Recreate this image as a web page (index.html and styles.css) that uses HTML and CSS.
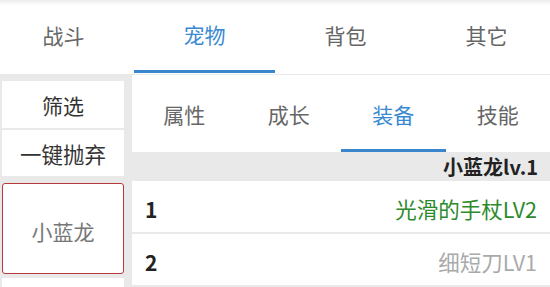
FILE: index.html
```html
<!DOCTYPE html>
<html lang="zh-CN">
<head>
    <meta charset="UTF-8">
    <meta name="viewport" content="width=device-width, initial-scale=1.0">
    <title>宠物</title>
    <link rel="stylesheet" href="styles.css">
</head>
<body>
    <div class="topbar">
        <div class="tabs">
            <div class="tab">战斗</div>
            <div class="tab active">宠物</div>
            <div class="tab">背包</div>
            <div class="tab">其它</div>
        </div>
    </div>

    <div class="main">
        <div class="side">
            <div class="btn btn-filter">筛选</div>
            <div class="btn btn-drop">一键抛弃</div>
            <div class="pet selected">小蓝龙</div>
            <div class="pet next"></div>
        </div>

        <div class="panel">
            <div class="subtabs">
                <div class="subtab">属性</div>
                <div class="subtab">成长</div>
                <div class="subtab active">装备</div>
                <div class="subtab">技能</div>
            </div>
            <div class="title">小蓝龙lv.1</div>
            <div class="row">
                <span class="num">1</span>
                <span class="item green">光滑的手杖LV2</span>
            </div>
            <div class="row">
                <span class="num">2</span>
                <span class="item gray">细短刀LV1</span>
            </div>
        </div>
    </div>
</body>
</html>
```

FILE: styles.css
```css
*{
    margin: 0;
    padding: 0;
    box-sizing: border-box;
}
html, body{
    overflow: hidden;
}
body{
    width: 550px;
    height: 287px;
    background-color: #e9e9e9;
    font-family: "Noto Sans CJK SC", "Noto Sans", sans-serif;
}
.topbar{
    height: 74px;
    background: linear-gradient(#ececec, #ffffff 5px);
    overflow: hidden;
}
.tabs{
    display: flex;
    margin-left: -7px;
    height: 100%;
}
.tab{
    flex: 0 0 141px;
    display: flex;
    align-items: center;
    justify-content: center;
    font-size: 21px;
    color: #666;
    border-bottom: 3px solid transparent;
    padding-bottom: 2px;
}
.tab.active{
    color: #3a8ad2;
    border-bottom: 3px solid #3a86cd;
    margin-bottom: 1px;
}
.main{
    display: flex;
    padding-top: 1px;
}
.side{
    width: 122px;
    margin-left: 2px;
    margin-top: 6px;
    display: flex;
    flex-direction: column;
}
.btn, .pet{
    background-color: #fff;
    display: flex;
    align-items: center;
    justify-content: center;
    font-size: 21px;
    color: #333;
}
.btn-filter{
    height: 47px;
    margin-bottom: 2px;
}
.btn-drop{
    height: 46px;
    margin-bottom: 7px;
    font-size: 21.5px;
}
.pet{
    height: 91px;
    margin-bottom: 4px;
    color: #777;
    padding-top: 4px;
}
.pet.selected{
    border: 1px solid #b8393c;
    border-radius: 3px;
}
.pet.next{
    height: 9px;
    margin-bottom: 0;
}
.panel{
    flex: 1;
    margin-left: 8px;
}
.subtabs{
    display: flex;
    height: 77px;
    background-color: #fff;
}
.subtab{
    flex: 1;
    display: flex;
    align-items: center;
    justify-content: center;
    font-size: 21px;
    color: #666;
    border-bottom: 3px solid transparent;
    padding-top: 3px;
}
.subtab.active{
    color: #3a8ad2;
    border-bottom-color: #3a86cd;
}
.title{
    height: 29px;
    line-height: 29px;
    text-align: right;
    padding-right: 12px;
    font-size: 20px;
    font-weight: bold;
    color: #222;
}
.row{
    height: 51px;
    margin-bottom: 2px;
    background-color: #fff;
    display: flex;
    align-items: center;
    justify-content: space-between;
    padding: 4px 13px 0 13px;
}
.num{
    font-size: 21px;
    font-weight: bold;
    color: #222;
}
.item{
    font-size: 21.5px;
}
.green{
    color: #2c8a2c;
}
.gray{
    color: #aaa;
}
```
